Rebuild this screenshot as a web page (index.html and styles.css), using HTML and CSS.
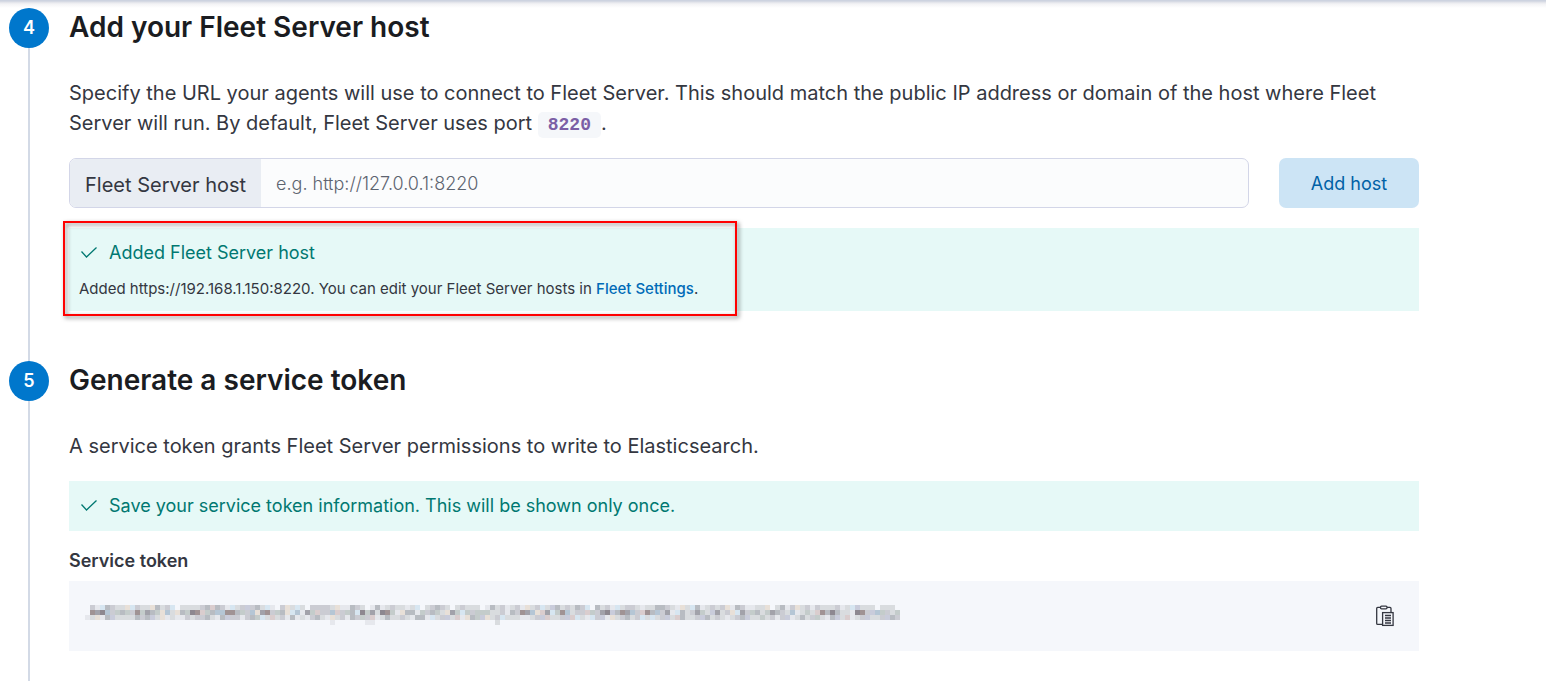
FILE: index.html
```html
<!DOCTYPE html>
<html lang="en">
<head>
<meta charset="utf-8">
<title>Add a Fleet Server</title>
<link rel="stylesheet" href="styles.css">
</head>
<body>
<div class="top-edge"></div>
<main class="steps">
  <section class="step">
    <div class="step-rail"><span class="step-number">4</span></div>
    <div class="step-body">
      <h2 class="step-title">Add your Fleet Server host</h2>
      <p class="step-text">Specify the URL your agents will use to connect to Fleet Server. This should match the public IP address or domain of the host where Fleet Server will run. By default, Fleet Server uses port <code class="code">8220</code>.</p>
      <form class="host-form">
        <div class="field">
          <label class="field-label" for="host">Fleet Server host</label>
          <input class="field-input" id="host" type="text" placeholder="e.g. http://127.0.0.1:8220">
        </div>
        <button class="button" type="button">Add host</button>
      </form>
      <div class="callout">
        <div class="callout-title">
          <svg class="check" viewBox="0 0 20 20" aria-hidden="true"><path d="M2.500 8.500l5 5.500L17.500 4.500"/></svg>
          <span>Added Fleet Server host</span>
        </div>
        <p class="callout-text">Added https://192.168.1.150:8220. You can edit your Fleet Server hosts in <a class="link" href="#settings">Fleet Settings</a>.</p>
        <div class="highlight"></div>
      </div>
    </div>
  </section>
  <section class="step">
    <div class="step-rail"><span class="step-number">5</span></div>
    <div class="step-body">
      <h2 class="step-title">Generate a service token</h2>
      <p class="step-text">A service token grants Fleet Server permissions to write to Elasticsearch.</p>
      <div class="callout callout-short">
        <div class="callout-title">
          <svg class="check" viewBox="0 0 20 20" aria-hidden="true"><path d="M2.500 8.500l5 5.500L17.500 4.500"/></svg>
          <span>Save your service token information. This will be shown only once.</span>
        </div>
      </div>
      <h3 class="token-label">Service token</h3>
      <div class="token-box">
        <svg class="mosaic" id="mosaic" width="815" height="22" viewBox="0 0 815 22" shape-rendering="crispEdges" role="img" aria-label="Hidden token"></svg>
        <button class="copy" type="button" aria-label="Copy">
          <svg width="20" height="22" viewBox="0 0 20 22" fill="none" stroke="#343741" stroke-width="1.300" aria-hidden="true">
            <path d="M7 19.400H2.700a1 1 0 0 1-1-1V3.400a1 1 0 0 1 1-1H5.500M12 2.400h3a1 1 0 0 1 1 1V7"/>
            <rect x="5.500" y="1.200" width="6.500" height="2.600" rx="1"/>
            <rect x="7.600" y="7.600" width="10.500" height="12.800"/>
            <path d="M10 10.500h6M10 13h6M10 15.500h6M10 18h6"/>
          </svg>
        </button>
      </div>
    </div>
  </section>
</main>
<script src="mosaic.js"></script>
</body>
</html>
```

FILE: styles.css
```css
* { box-sizing: border-box; }
body {
  margin: 0;
  background: #fff;
  color: #343741;
  font-family: Inter, "Liberation Sans", sans-serif;
  font-size: 20px;
  line-height: 30px;
}
h2, h3, p { margin: 0; }
.top-edge {
  height: 8px;
  background: linear-gradient(#cdd3e0 1px, #dfe1e8 2px, #f3f3f5 4px, #fff);
}
.steps {
  max-width: 1419px;
  padding-left: 9px;
}
.step { display: flex; gap: 20px; }
.step-rail {
  flex: none;
  width: 40px;
  background: linear-gradient(#d3dae6, #d3dae6) center / 2px 100% no-repeat;
}
.step-number {
  display: flex;
  align-items: center;
  justify-content: center;
  height: 40px;
  border-radius: 50%;
  background: #0077cc;
  color: #fff;
  font-size: 18px;
  font-weight: 600;
}
.step-body { flex: 1; min-width: 0; padding-bottom: 50px; }
.step-title {
  margin-bottom: 32px;
  color: #1a1c21;
  font-size: 28px;
  font-weight: 600;
  line-height: 38px;
}
.step-text { margin-bottom: 20px; font-weight: 400; }
.code {
  padding: 3px 10px;
  border-radius: 5px;
  background: #f5f7fa;
  color: #7b5ea5;
  font: 700 18px/20px "Liberation Mono", monospace;
}
.host-form { display: flex; gap: 30px; margin-bottom: 20px; }
.field {
  display: flex;
  flex: 1;
  height: 50px;
  overflow: hidden;
  border: 1px solid #d3d6e8;
  border-radius: 7px;
  background: #fbfcfd;
}
.field-label {
  padding: 0 15px;
  background: #e9edf3;
  font-weight: 400;
  line-height: 52px;
}
.field-input {
  flex: 1;
  min-width: 0;
  padding: 0 15px;
  border: 0;
  background: transparent;
  color: #343741;
  font: 300 18px Inter, sans-serif;
}
.field-input::placeholder { color: #5d6470; }
.button {
  width: 140px;
  height: 50px;
  border: 0;
  border-radius: 7px;
  background: #cce4f5;
  color: #0061a6;
  font: 400 18px Inter, sans-serif;
}
.callout {
  position: relative;
  padding: 10px;
  background: #e6f9f7;
}
.callout-title {
  display: flex;
  align-items: center;
  gap: 10px;
  color: #007871;
  font-size: 18px;
  font-weight: 400;
}
.check {
  width: 20px;
  height: 20px;
  fill: none;
  stroke: currentColor;
  stroke-width: 1.3;
}
.callout-text {
  padding-top: 8px;
  font-size: 15px;
  font-weight: 400;
  line-height: 25px;
}
.link { color: #006bb8; font-weight: 500; text-decoration: none; }
.highlight {
  position: absolute;
  top: -7px;
  left: -6px;
  width: 674px;
  height: 95px;
  border: 2px solid #f00;
  filter: drop-shadow(2px 2px 2px rgba(0, 0, 0, 0.5));
  pointer-events: none;
}
.callout-short { margin-bottom: 15px; }
.token-label {
  margin-bottom: 5px;
  font-size: 18px;
  font-weight: 600;
}
.token-box {
  display: flex;
  justify-content: space-between;
  align-items: center;
  height: 70px;
  padding: 0 24px 0 16px;
  background: #f5f7fb;
}
.copy {
  display: flex;
  padding: 0;
  border: 0;
  background: none;
}
```

FILE: mosaic.js
```javascript
const palette = {
  a: '#e6e8ed', b: '#d9dcdf', c: '#cbccd3', d: '#b8bcc2', e: '#a2a2aa', f: '#8d8890',
  p: '#dacdce', r: '#a09394', y: '#e8e0d8', s: '#d7e6f1', t: '#b5c6d5', g: '#c4cccb', v: '#c9ccdb'
};
const rows = [
  '.casdcbbyscbbydbcs.bbbbcdpdcasbcvcdbsa.cybsb.ccccbyaadcb.adabcbbabs.bcdcb.bcbbb.adbcabcaybcsbvdbcbdcs.dbcasbccbabbddcbaybsdabcbcyadcaabby.bdacybcacbbbcabsvbbb.bbb.dybsbc',
  '.reftcgdgcrgedgytbydgfrpgdttrrdgctyercgdystaegpcctpcgdsfgebfrgayddagcdgbyegsgcgggbbcadcretypesgrtbccpgcefvdretcprdtceasdbcegbvebcysecgdbgedcbtabgbprdfdbbafrcvtgcbgdesgpcbbg',
  'abyadvbbbbdcdvbyabaacbccdbadvccacdgsbpbcadabacdbaybcadcgcpabdbbcbaddasbcvbpaydgvybcsbbbaabcvpbbcvpsbascvaybcdbcsbsbcvbpdbbcvdbcbabcdvbbgbcacvabdbcgbadvbpabcvbbcvdcasbdcc'
];
const descenders = [[49, 'a'], [56, 'a'], [57, 'a'], [82, 'b']];
const svg = document.getElementById('mosaic');

function cell(column, row, key) {
  if (!palette[key]) return;
  const rect = document.createElementNS('http://www.w3.org/2000/svg', 'rect');
  rect.setAttribute('x', column * 5);
  rect.setAttribute('y', row * 5);
  rect.setAttribute('width', 5);
  rect.setAttribute('height', 5);
  rect.setAttribute('fill', palette[key]);
  svg.appendChild(rect);
}

rows.forEach((keys, row) => [...keys].slice(0, 163).forEach((key, column) => cell(column, row, key)));
descenders.forEach(([column, key]) => cell(column, 3, key));
```
